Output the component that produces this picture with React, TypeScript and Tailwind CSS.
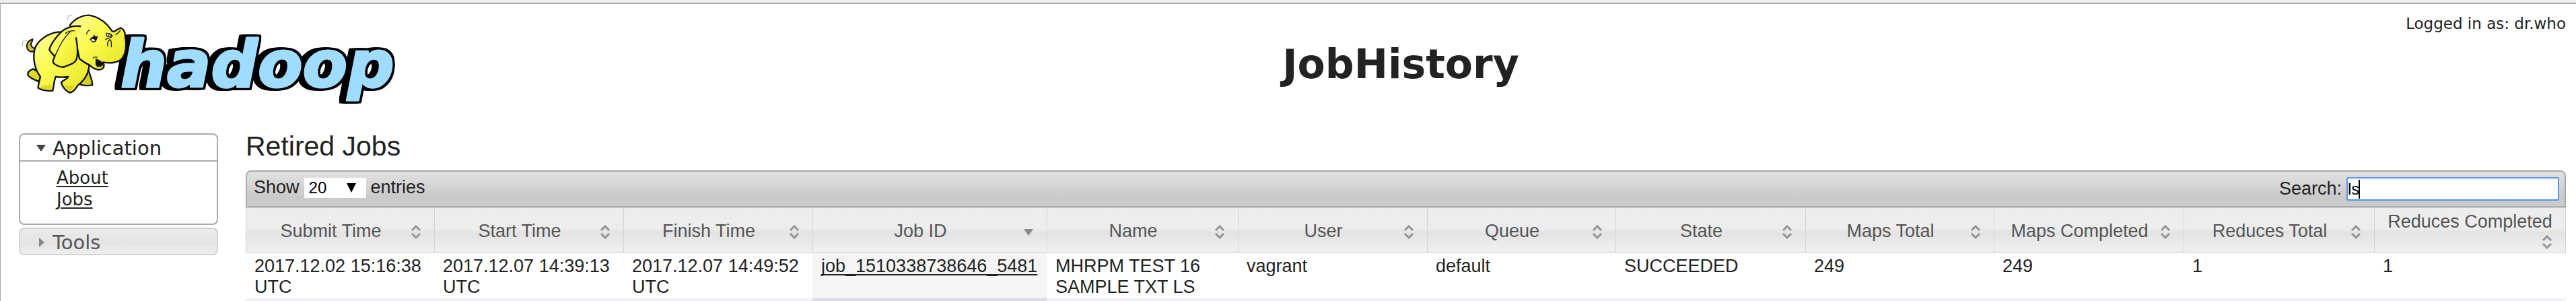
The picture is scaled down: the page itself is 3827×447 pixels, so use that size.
import React from "react";

type Column = { label: string; width: string; sorted?: boolean };

const columns: Column[] = [
  { label: "Submit Time", width: "w-[280px]" },
  { label: "Start Time", width: "w-[281px]" },
  { label: "Finish Time", width: "w-[281px]" },
  { label: "Job ID", width: "w-[348px]", sorted: true },
  { label: "Name", width: "w-[284px]" },
  { label: "User", width: "w-[281px]" },
  { label: "Queue", width: "w-[280px]" },
  { label: "State", width: "w-[282px]" },
  { label: "Maps Total", width: "w-[280px]" },
  { label: "Maps Completed", width: "w-[282px]" },
  { label: "Reduces Total", width: "w-[283px]" },
  { label: "Reduces Completed", width: "w-[285px]" },
];

const jobs: string[][] = [
  [
    "2017.12.02 15:16:38 UTC",
    "2017.12.07 14:39:13 UTC",
    "2017.12.07 14:49:52 UTC",
    "job_1510338738646_5481",
    "MHRPM TEST 16 SAMPLE TXT LS",
    "vagrant",
    "default",
    "SUCCEEDED",
    "249",
    "249",
    "1",
    "1",
  ],
];

function HadoopLogo() {
  return (
    <svg
      width="570"
      height="150"
      viewBox="24 12 570 150"
      role="img"
      aria-label="Hadoop"
      className="block"
    >
      <defs>
        <linearGradient id="skin" x1="0" y1="0" x2="1" y2="1">
          <stop offset="0" stopColor="#fdfda0" />
          <stop offset="0.4" stopColor="#fbfb55" />
          <stop offset="1" stopColor="#e6e41f" />
        </linearGradient>
      </defs>
      <text
        x="179"
        y="129"
        fontSize="97"
        fontWeight="700"
        fontStyle="italic"
        fill="#a0dcff"
        stroke="#a0dcff"
        strokeWidth="3"
        strokeLinejoin="round"
        className="font-['DejaVu_Sans',sans-serif] [filter:drop-shadow(3px_0_0_#000)_drop-shadow(0_3px_0_#000)_drop-shadow(0_-3px_0_#000)_drop-shadow(-5px_0_0_#000)_drop-shadow(-5px_0_0_#000)]"
      >
        hadoop
      </text>
      <g
        transform="translate(24 15) scale(0.33333)"
        stroke="#111"
        strokeWidth="7"
        strokeLinejoin="round"
        strokeLinecap="round"
        fill="url(#skin)"
      >
        <path d="M80 184C60 190 46 176 48 156C50 144 60 134 74 130L70 142C62 152 66 166 82 170Z" fill="#c9c727" strokeWidth="6" />
        <path d="M76 262C62 266 50 276 52 288C60 304 82 310 102 319L112 280Z" fill="#dedc22" />
        <path d="M320 258C326 286 338 304 340 334C318 338 296 336 282 330L296 290Z" fill="#d2d01c" />
        <path d="M190 97C140 102 92 138 82 176C74 216 82 264 108 296C104 316 98 332 98 347C116 357 142 361 163 359C168 338 168 318 176 297C194 300 214 299 232 297C224 312 208 310 201 323C206 344 224 362 238 368C258 364 264 350 276 334C306 312 324 280 326 240L270 110Z" />
        <path d="M240 66C262 38 294 22 324 23C372 30 404 58 428 94C440 102 446 84 466 80C480 84 486 96 486 118C492 154 490 194 470 218C450 236 416 238 388 232C398 256 384 268 362 265C340 262 338 250 322 242C306 236 300 230 282 216L262 120Z" />
        <path d="M356 218C368 222 380 228 386 236C386 250 378 256 366 254C354 250 354 238 356 218Z" fill="#111" strokeWidth="3" />
        <path d="M352 254C360 250 372 254 380 250C378 262 360 266 352 254Z" fill="#d9d72a" stroke="none" />
        <path d="M286 72C250 66 214 82 192 106C168 134 152 156 148 176C154 190 166 196 172 208C164 220 162 230 168 238C182 248 198 256 214 253C232 244 252 242 264 228C276 212 276 166 267 124" />
        <path d="M172 206C190 170 206 128 240 98M220 104C232 92 248 92 260 92M314 106C316 96 320 92 328 88M300 230L318 242M344 214C348 208 354 208 360 210" fill="none" strokeWidth="4" />
        <path d="M328 132C334 122 344 112 354 118L366 116C358 126 362 140 346 144C336 144 334 134 328 132Z" fill="#111" stroke="none" />
        <path d="M334 132C340 126 348 128 352 136C346 142 338 140 334 132Z" fill="#fff" stroke="none" />
        <path d="M350 118L348 112M404 108C412 102 424 106 428 114L406 118M398 132C408 124 420 126 428 118M408 160C404 150 408 142 416 132M424 164C424 150 426 140 420 132M444 110C452 104 460 98 464 90" fill="none" strokeWidth="4" />
        <path d="M402 102L416 108L406 118Z" fill="#fff" strokeWidth="3" />
        <path d="M106 344C120 330 142 340 152 328L160 354C142 358 120 354 106 344ZM214 330C230 342 246 336 262 332L240 362C230 356 220 346 214 330Z" fill="#c9c71d" stroke="none" opacity="0.6" />
        <path d="M228 44L234 26L250 24M28 160L28 142L46 134" fill="none" stroke="#aaa" strokeWidth="3" />
      </g>
    </svg>
  );
}

function SortIcon({ sorted }: { sorted?: boolean }) {
  return (
    <svg width="28" height="28" viewBox="0 0 28 28" className="ml-auto shrink-0" aria-hidden="true">
      {sorted ? (
        <path d="M7 10H21L14 20Z" fill="#888" />
      ) : (
        <path d="M8 12L14 6L20 12M8 17L14 23L20 17" fill="none" stroke="#929292" strokeWidth="3" />
      )}
    </svg>
  );
}

export default function App() {
  return (
    <div className="bg-white font-['Liberation_Sans',Arial,sans-serif] text-[27px] leading-[31px] text-[#222]">
      <div className="h-1 bg-[#f0f0f0]" />
      <div className="border-t-2 border-l border-[#a9a9a9]">
        <header className="flex h-[188px] items-start pr-[15px] font-['DejaVu_Sans',Verdana,sans-serif]">
          <div className="w-[349px] shrink-0 pt-[6px] pl-[23px]">
            <HadoopLogo />
          </div>
          <div className="flex-1 pt-4">
            <p className="text-right text-[23px] leading-[27px]">Logged in as: dr.who</p>
            <h1 className="mt-[11px] text-center text-[60px] leading-[70px] font-bold">JobHistory</h1>
          </div>
        </header>

        <div className="flex items-start pr-[15px] pl-[27px]">
          <nav className="mt-1 mr-[41px] flex w-[296px] shrink-0 flex-col gap-1 font-['DejaVu_Sans',Verdana,sans-serif]">
            <div className="rounded-lg border-2 border-[#aaa]">
              <button
                type="button"
                aria-expanded="true"
                className="flex w-full items-center border-b-2 border-[#aaa] pt-[3px] pb-px pl-[24px] text-left text-[29px] leading-[34px]"
              >
                <svg width="14" height="10" viewBox="0 0 14 10" className="mr-[10px]" aria-hidden="true">
                  <path d="M0 0H14L7 10Z" fill="#444" />
                </svg>
                Application
              </button>
              <ul className="pt-2 pb-5 pl-[54px] text-[26px] leading-8">
                <li>
                  <a href="#about" className="underline decoration-2 underline-offset-[3px]">About</a>
                </li>
                <li>
                  <a href="#jobs" className="underline decoration-2 underline-offset-[3px]">Jobs</a>
                </li>
              </ul>
            </div>
            <button
              type="button"
              aria-expanded="false"
              className="flex w-full items-center rounded-lg border-2 border-[#d3d3d3] bg-linear-to-b from-[#ebebeb] via-[#e4e4e4] via-60% to-[#efefef] pt-[3px] pl-[28px] text-left text-[29px] leading-[34px] text-[#555]"
            >
              <svg width="8" height="14" viewBox="0 0 8 14" className="mr-[12px]" aria-hidden="true">
                <path d="M0 0V14L8 7Z" fill="#888" />
              </svg>
              Tools
            </button>
          </nav>

          <main className="min-w-0 flex-1">
            <h2 className="mb-[13px] text-[41px] leading-[46px]">Retired Jobs</h2>

            <div className="flex items-start justify-between rounded-t-lg border-2 border-[#aaa] bg-linear-to-b from-[#e2e2e2] via-[#c9c9c9] via-75% to-[#cccccc] py-2 pr-2 pl-[10px]">
              <label className="flex items-center gap-[7px]">
                Show
                <span className="relative flex">
                  <select
                    defaultValue="20"
                    className="h-[30px] w-[92px] appearance-none bg-white pl-[7px] text-[24px] leading-[30px] text-black outline-none"
                  >
                    <option>20</option>
                    <option>40</option>
                    <option>60</option>
                    <option>80</option>
                    <option>100</option>
                  </select>
                  <svg
                    width="14"
                    height="14"
                    viewBox="0 0 14 14"
                    className="pointer-events-none absolute top-2 right-[15px]"
                    aria-hidden="true"
                  >
                    <path d="M0 0H14L7 14Z" fill="#000" />
                  </svg>
                </span>
                entries
              </label>
              <label className="flex items-center gap-[7px]">
                Search:
                <span className="relative flex">
                  <input
                    type="text"
                    defaultValue="ls"
                    className="h-[35px] w-[316px] rounded-[3px] border-2 border-[#5394f5] bg-white text-[24px] text-black caret-transparent outline-none"
                  />
                  <span className="absolute top-1 left-[18px] h-7 w-[2px] bg-black" />
                </span>
              </label>
            </div>

            <table className="w-full table-fixed border-separate border-spacing-0 text-left">
              <thead>
                <tr className="bg-linear-to-b from-[#ededed] from-45% via-[#e3e3e3] via-55% to-[#f1f1f1]">
                  {columns.map((column) => (
                    <th
                      key={column.label}
                      scope="col"
                      className={`${column.width} h-[68px] border-t border-b border-l border-[#d3d3d3] px-[13px] pt-[3px] font-normal text-[#555] last:border-r`}
                    >
                      <button type="button" className="flex w-full flex-wrap items-center">
                        <span className="grow text-center whitespace-nowrap">{column.label}</span>
                        <SortIcon sorted={column.sorted} />
                      </button>
                    </th>
                  ))}
                </tr>
              </thead>
              <tbody>
                {jobs.map((job) => (
                  <tr key={job[3]}>
                    {job.map((value, index) => (
                      <td
                        key={columns[index].label}
                        className={`px-[13px] pt-1 pb-px align-top ${columns[index].sorted ? "bg-[#f5f5f5]" : ""}`}
                      >
                        {columns[index].sorted ? (
                          <a
                            href="#job"
                            className="underline decoration-2 underline-offset-[3px] [text-decoration-skip-ink:none]"
                          >
                            {value}
                          </a>
                        ) : (
                          value
                        )}
                      </td>
                    ))}
                  </tr>
                ))}
                <tr>
                  {columns.map((column) => (
                    <td
                      key={column.label}
                      className={`h-1 ${column.sorted ? "bg-[#dcdce8]" : "bg-[#f1f1fd]"}`}
                    />
                  ))}
                </tr>
              </tbody>
            </table>
          </main>
        </div>
      </div>
    </div>
  );
}
